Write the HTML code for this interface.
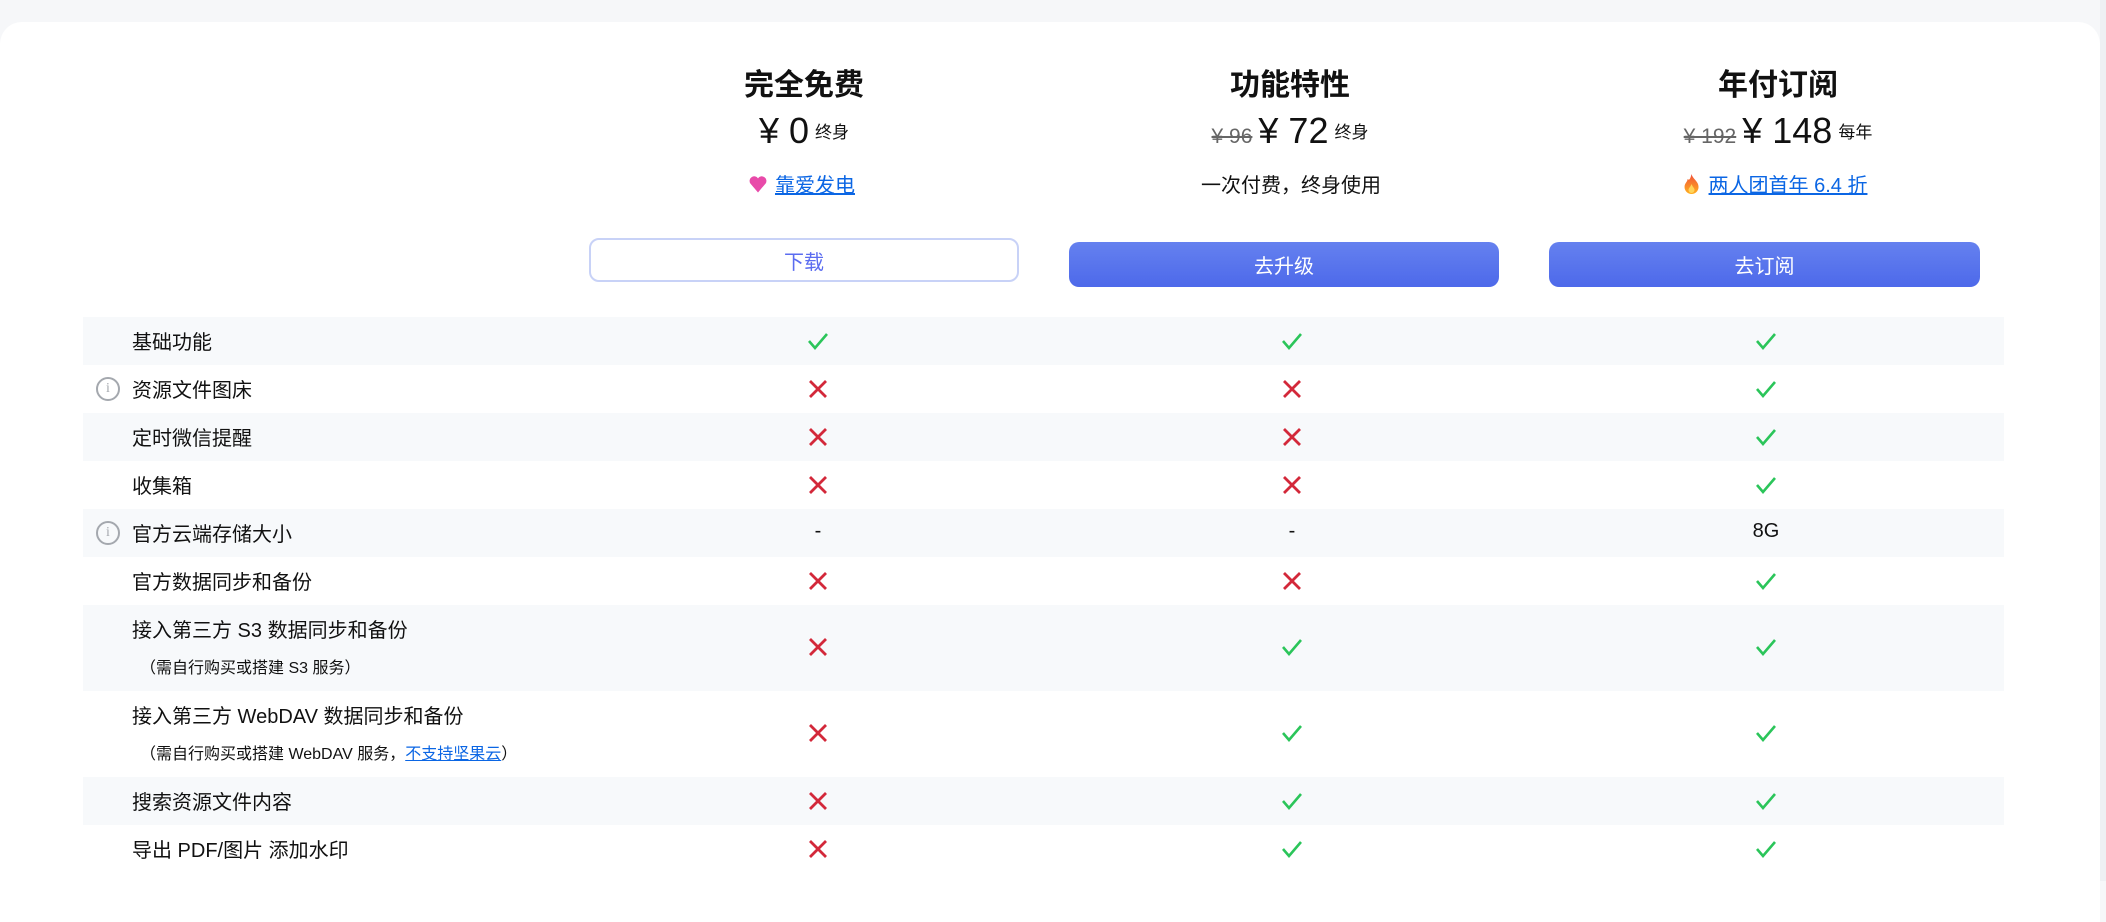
<!DOCTYPE html>
<html><head><meta charset="utf-8"><style>
*{margin:0;padding:0;box-sizing:border-box}
body{width:2106px;height:881px;overflow:hidden;background:#f6f7f9;font-family:"Liberation Sans","Noto Sans CJK SC",sans-serif;color:#111;position:relative}
.card{position:absolute;left:0;top:22px;width:2100px;height:900px;background:#fff;border-radius:22px 22px 0 0}
.strip{position:absolute;left:2100px;top:0;width:6px;height:881px;background:#eef0f3}
.a{position:absolute;white-space:nowrap}
.c{transform:translateX(-50%)}
.title{font-size:30px;font-weight:bold;top:60px}
.price{top:110px;font-size:36px;display:flex;align-items:baseline;gap:6px}
.old{font-size:21px;color:#666;text-decoration:line-through}
.unit{font-size:17px;position:relative;top:-5px}
.sub{top:169px;font-size:20px;display:flex;align-items:center;gap:8px}
.lnk{color:#0b66e4;text-decoration:underline}
.btn{position:absolute;height:45px;border-radius:10px;color:#fff;font-size:20px;display:flex;align-items:center;justify-content:center;background:linear-gradient(#6581ef,#4d69ea)}
.row{position:absolute;left:83px;width:1921px;height:48px}
.g{background:#f7f9fb}
.lab{position:absolute;left:132px;font-size:20px}
.sm{position:absolute;left:140px;font-size:16px}
.info{position:absolute;left:96px;width:24px;height:24px;border:2px solid #a4a8ae;border-radius:50%;color:#a4a8ae;font-size:14px;font-family:"Liberation Serif",serif;display:flex;align-items:center;justify-content:center}
.ic{position:absolute;width:22px;height:22px}
.v{position:absolute;font-size:20px;transform:translateX(-50%)}
</style></head><body>
<div class="card"></div><div class="strip"></div>

<div class="a c title" style="left:804px">完全免费</div>
<div class="a c title" style="left:1290px">功能特性</div>
<div class="a c title" style="left:1778px">年付订阅</div>

<div class="a c price" style="left:804px"><span>¥ 0</span><span class="unit">终身</span></div>
<div class="a c price" style="left:1290px"><span class="old">¥ 96</span><span>¥ 72</span><span class="unit">终身</span></div>
<div class="a c price" style="left:1778px"><span class="old">¥ 192</span><span>¥ 148</span><span class="unit">每年</span></div>

<div class="a c sub" style="left:802px"><svg width="18" height="18" viewBox="0 0 16 16"><path d="M8 15.5 L1.2 7.5 A3.7 3.7 0 0 1 8 3 A3.7 3.7 0 0 1 14.8 7.5Z" fill="#e84aa9"/></svg><span class="lnk">靠爱发电</span></div>
<div class="a c sub" style="left:1291px">一次付费，终身使用</div>
<div class="a c sub" style="left:1775px"><svg width="18" height="22" viewBox="0 0 18 22"><defs><linearGradient id="f" x1="0" y1="0" x2="0" y2="1"><stop offset="0" stop-color="#f0503a"/><stop offset="1" stop-color="#ffb020"/></linearGradient></defs><path d="M9 1 C10 6 16 8 16 14 A7 7 0 0 1 2 14 C2 10 5 9 5 6 C7 8 8 5 9 1Z" fill="url(#f)"/><path d="M9 11 C10 14 12 15 12 17 A3 3 0 0 1 6 17 C6 15 8 14 9 11Z" fill="#ffd45a"/></svg><span class="lnk">两人团首年 6.4 折</span></div>

<div class="btn" style="left:589px;top:238px;width:430px;height:44px;background:#fff;border:2px solid #c8d2f7;color:#5b6cf0">下载</div>
<div class="btn" style="left:1069px;top:242px;width:430px">去升级</div>
<div class="btn" style="left:1549px;top:242px;width:431px">去订阅</div>

<div class="row g" style="top:317px"></div>
<div class="row" style="top:365px"></div>
<div class="row g" style="top:413px"></div>
<div class="row g" style="top:509px"></div>
<div class="row g" style="top:605px;height:86px"></div>
<div class="row g" style="top:777px"></div>

<div class="lab" style="top:326px">基础功能</div>
<div class="info" style="top:377px">i</div><div class="lab" style="top:374px">资源文件图床</div>
<div class="lab" style="top:422px">定时微信提醒</div>
<div class="lab" style="top:470px">收集箱</div>
<div class="info" style="top:521px">i</div><div class="lab" style="top:518px">官方云端存储大小</div>
<div class="lab" style="top:566px">官方数据同步和备份</div>
<div class="lab" style="top:614px">接入第三方 S3 数据同步和备份</div>
<div class="sm" style="top:654px">（需自行购买或搭建 S3 服务）</div>
<div class="lab" style="top:700px">接入第三方 WebDAV 数据同步和备份</div>
<div class="sm" style="top:740px">（需自行购买或搭建 WebDAV 服务，<span class="lnk">不支持坚果云</span>）</div>
<div class="lab" style="top:786px">搜索资源文件内容</div>
<div class="lab" style="top:834px">导出 PDF/图片 添加水印</div>

<svg width="0" height="0" style="position:absolute"><defs>
<symbol id="ok" viewBox="0 0 22 22"><path d="M2 11 L8 18 L20 4" fill="none" stroke="#2bc55a" stroke-width="2.6"/></symbol>
<symbol id="no" viewBox="0 0 22 22"><path d="M3 3 L19 19 M19 3 L3 19" fill="none" stroke="#d3283a" stroke-width="2.8"/></symbol>
</defs></svg>

<svg class="ic" style="left:807px;top:330px"><use href="#ok"/></svg>
<svg class="ic" style="left:1281px;top:330px"><use href="#ok"/></svg>
<svg class="ic" style="left:1755px;top:330px"><use href="#ok"/></svg>

<svg class="ic" style="left:807px;top:378px"><use href="#no"/></svg>
<svg class="ic" style="left:1281px;top:378px"><use href="#no"/></svg>
<svg class="ic" style="left:1755px;top:378px"><use href="#ok"/></svg>

<svg class="ic" style="left:807px;top:426px"><use href="#no"/></svg>
<svg class="ic" style="left:1281px;top:426px"><use href="#no"/></svg>
<svg class="ic" style="left:1755px;top:426px"><use href="#ok"/></svg>

<svg class="ic" style="left:807px;top:474px"><use href="#no"/></svg>
<svg class="ic" style="left:1281px;top:474px"><use href="#no"/></svg>
<svg class="ic" style="left:1755px;top:474px"><use href="#ok"/></svg>

<div class="v" style="left:818px;top:520px">-</div>
<div class="v" style="left:1292px;top:520px">-</div>
<div class="v" style="left:1766px;top:520px">8G</div>

<svg class="ic" style="left:807px;top:570px"><use href="#no"/></svg>
<svg class="ic" style="left:1281px;top:570px"><use href="#no"/></svg>
<svg class="ic" style="left:1755px;top:570px"><use href="#ok"/></svg>

<svg class="ic" style="left:807px;top:636px"><use href="#no"/></svg>
<svg class="ic" style="left:1281px;top:636px"><use href="#ok"/></svg>
<svg class="ic" style="left:1755px;top:636px"><use href="#ok"/></svg>

<svg class="ic" style="left:807px;top:722px"><use href="#no"/></svg>
<svg class="ic" style="left:1281px;top:722px"><use href="#ok"/></svg>
<svg class="ic" style="left:1755px;top:722px"><use href="#ok"/></svg>

<svg class="ic" style="left:807px;top:790px"><use href="#no"/></svg>
<svg class="ic" style="left:1281px;top:790px"><use href="#ok"/></svg>
<svg class="ic" style="left:1755px;top:790px"><use href="#ok"/></svg>

<svg class="ic" style="left:807px;top:838px"><use href="#no"/></svg>
<svg class="ic" style="left:1281px;top:838px"><use href="#ok"/></svg>
<svg class="ic" style="left:1755px;top:838px"><use href="#ok"/></svg>
</body></html>
